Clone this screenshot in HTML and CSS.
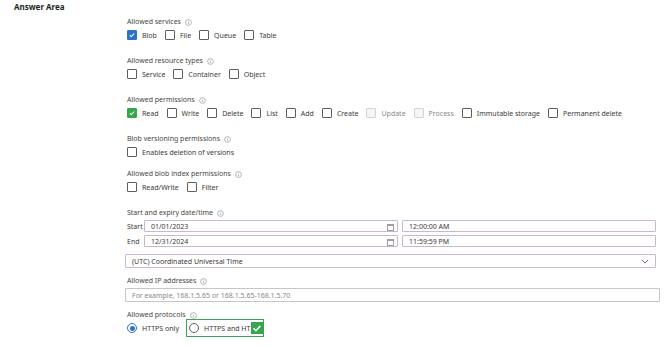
FILE: index.html
```html
<!DOCTYPE html>
<html lang="en">
<head>
<meta charset="utf-8">
<title>Answer Area</title>
<link rel="stylesheet" href="styles.css">
</head>
<body>
<h1 class="title">Answer Area</h1>
<main class="form">

<section class="group">
<div class="label">Allowed services <span class="info"><svg viewBox="0 0 8 8"><circle cx="4" cy="4" r="3.3"/><path d="M4 3.6v2.2M4 2.2v.6"/></svg></span></div>
<div class="row">
<span class="opt"><span class="cb on-blue"><svg viewBox="0 0 10 10"><path d="M2.3 5.2l1.9 1.9 3.6-4"/></svg></span>Blob</span>
<span class="opt"><span class="cb"></span>File</span>
<span class="opt"><span class="cb"></span>Queue</span>
<span class="opt"><span class="cb"></span>Table</span>
</div>
</section>

<section class="group">
<div class="label">Allowed resource types <span class="info"><svg viewBox="0 0 8 8"><circle cx="4" cy="4" r="3.3"/><path d="M4 3.6v2.2M4 2.2v.6"/></svg></span></div>
<div class="row">
<span class="opt"><span class="cb"></span>Service</span>
<span class="opt"><span class="cb"></span>Container</span>
<span class="opt"><span class="cb"></span>Object</span>
</div>
</section>

<section class="group">
<div class="label">Allowed permissions <span class="info"><svg viewBox="0 0 8 8"><circle cx="4" cy="4" r="3.3"/><path d="M4 3.6v2.2M4 2.2v.6"/></svg></span></div>
<div class="row">
<span class="opt"><span class="cb on-green"><svg viewBox="0 0 10 10"><path d="M2.3 5.2l1.9 1.9 3.6-4"/></svg></span>Read</span>
<span class="opt"><span class="cb"></span>Write</span>
<span class="opt"><span class="cb"></span>Delete</span>
<span class="opt"><span class="cb"></span>List</span>
<span class="opt"><span class="cb"></span>Add</span>
<span class="opt"><span class="cb"></span>Create</span>
<span class="opt off"><span class="cb"></span>Update</span>
<span class="opt off"><span class="cb"></span>Process</span>
<span class="opt"><span class="cb"></span>Immutable storage</span>
<span class="opt"><span class="cb"></span>Permanent delete</span>
</div>
</section>

<section class="group g-versions">
<div class="label">Blob versioning permissions <span class="info"><svg viewBox="0 0 8 8"><circle cx="4" cy="4" r="3.3"/><path d="M4 3.6v2.2M4 2.2v.6"/></svg></span></div>
<div class="row">
<span class="opt"><span class="cb"></span>Enables deletion of versions</span>
</div>
</section>

<section class="group">
<div class="label">Allowed blob index permissions <span class="info"><svg viewBox="0 0 8 8"><circle cx="4" cy="4" r="3.3"/><path d="M4 3.6v2.2M4 2.2v.6"/></svg></span></div>
<div class="row">
<span class="opt"><span class="cb"></span>Read/Write</span>
<span class="opt"><span class="cb"></span>Filter</span>
</div>
</section>

<section class="group g-dates">
<div class="label">Start and expiry date/time <span class="info"><svg viewBox="0 0 8 8"><circle cx="4" cy="4" r="3.3"/><path d="M4 3.6v2.2M4 2.2v.6"/></svg></span></div>
<div class="daterow">
<span class="dlabel">Start</span>
<span class="field date">01/01/2023<span class="cal"></span></span>
<span class="field time">12:00:00 AM</span>
</div>
<div class="daterow">
<span class="dlabel">End</span>
<span class="field date">12/31/2024<span class="cal"></span></span>
<span class="field time">11:59:59 PM</span>
</div>
<div class="field select">(UTC) Coordinated Universal Time<svg class="chev" viewBox="0 0 10 6"><path d="M1 1l4 4 4-4"/></svg></div>
</section>

<section class="group g-ip">
<div class="label">Allowed IP addresses <span class="info"><svg viewBox="0 0 8 8"><circle cx="4" cy="4" r="3.3"/><path d="M4 3.6v2.2M4 2.2v.6"/></svg></span></div>
<div class="field ip">For example, 168.1.5.65 or 168.1.5.65-168.1.5.70</div>
</section>

<section class="group">
<div class="label">Allowed protocols <span class="info"><svg viewBox="0 0 8 8"><circle cx="4" cy="4" r="3.3"/><path d="M4 3.6v2.2M4 2.2v.6"/></svg></span></div>
<div class="row">
<span class="opt"><span class="radio on"></span>HTTPS only</span>
<span class="opt answer"><span class="radio"></span>HTTPS and HT<span class="tick"><svg viewBox="0 0 12 12"><path d="M2.5 6.3l2.4 2.4 4.6-5"/></svg></span></span>
</div>
</section>

</main>
</body>
</html>
```

FILE: styles.css
```css
body{margin:0;background:#ffffff;color:#3b3a39;font-family:"Noto Sans","Open Sans",sans-serif;font-size:7px;}
.title{margin:0;padding:2px 0 0 14px;font-size:8px;line-height:10px;font-weight:700;color:#201f1e;}
.form{width:535px;margin:5px 0 0 125px;}
.group{padding-left:2px;margin-bottom:16px;}
.g-versions{margin-bottom:12px;}
.label{height:10px;line-height:10px;margin-bottom:3px;display:flex;align-items:center;color:#484644;}
.info{display:inline-flex;margin-left:4px;}
.info svg{width:7px;height:7px;fill:none;stroke:#8a8886;stroke-width:.7;}
.row{display:flex;align-items:center;height:10px;}
.opt{display:inline-flex;align-items:center;margin-right:8px;}
.cb{width:8px;height:8px;border:1px solid #605e5c;border-radius:1px;margin-right:5px;display:inline-flex;}
.cb svg{width:8px;height:8px;fill:none;stroke:#ffffff;stroke-width:1.3;}
.on-blue{background:#2b73c6;border-color:#2b73c6;}
.on-green{background:#33a74a;border-color:#33a74a;}
.off{color:#8a8886;}
.off .cb{border-color:#d6d4d2;background:#f6f5f4;}
.g-dates .label{margin-bottom:2px;}
.daterow{display:flex;align-items:center;gap:4px;margin-bottom:3px;}
.dlabel{width:13px;}
.field{box-sizing:border-box;display:flex;align-items:center;border:1px solid #c9b6d1;border-radius:1px;padding:0 6px;}
.date{width:254px;height:12px;position:relative;}
.time{width:254px;height:12px;}
.cal{position:absolute;right:3px;top:3px;width:5px;height:4px;border:1px solid #a19f9d;border-top-width:2px;}
.select{width:531px;height:14px;margin-left:-2px;margin-top:7px;justify-content:space-between;}
.chev{width:8px;height:5px;fill:none;stroke:#605e5c;stroke-width:1.2;}
.g-dates{margin-bottom:8px;}
.g-ip{margin-bottom:8px;}
.g-ip .label{margin-bottom:2px;}
.ip{width:535px;height:14px;margin-left:-2px;border-color:#c8c6c4;color:#8a8886;}
.radio{box-sizing:border-box;width:10px;height:10px;border:1px solid #605e5c;border-radius:50%;margin-right:5px;display:inline-flex;align-items:center;justify-content:center;}
.radio.on{border-color:#2b73c6;}
.radio.on::after{content:"";width:5px;height:5px;border-radius:50%;background:#2b73c6;}
.answer{border:1.5px solid #3aa356;padding:2px 0 2px 2px;margin-left:-1px;}
.tick{display:inline-flex;width:12px;height:12px;background:#33a74a;margin-left:1px;}
.tick svg{width:12px;height:12px;fill:none;stroke:#ffffff;stroke-width:1.6;}
```
